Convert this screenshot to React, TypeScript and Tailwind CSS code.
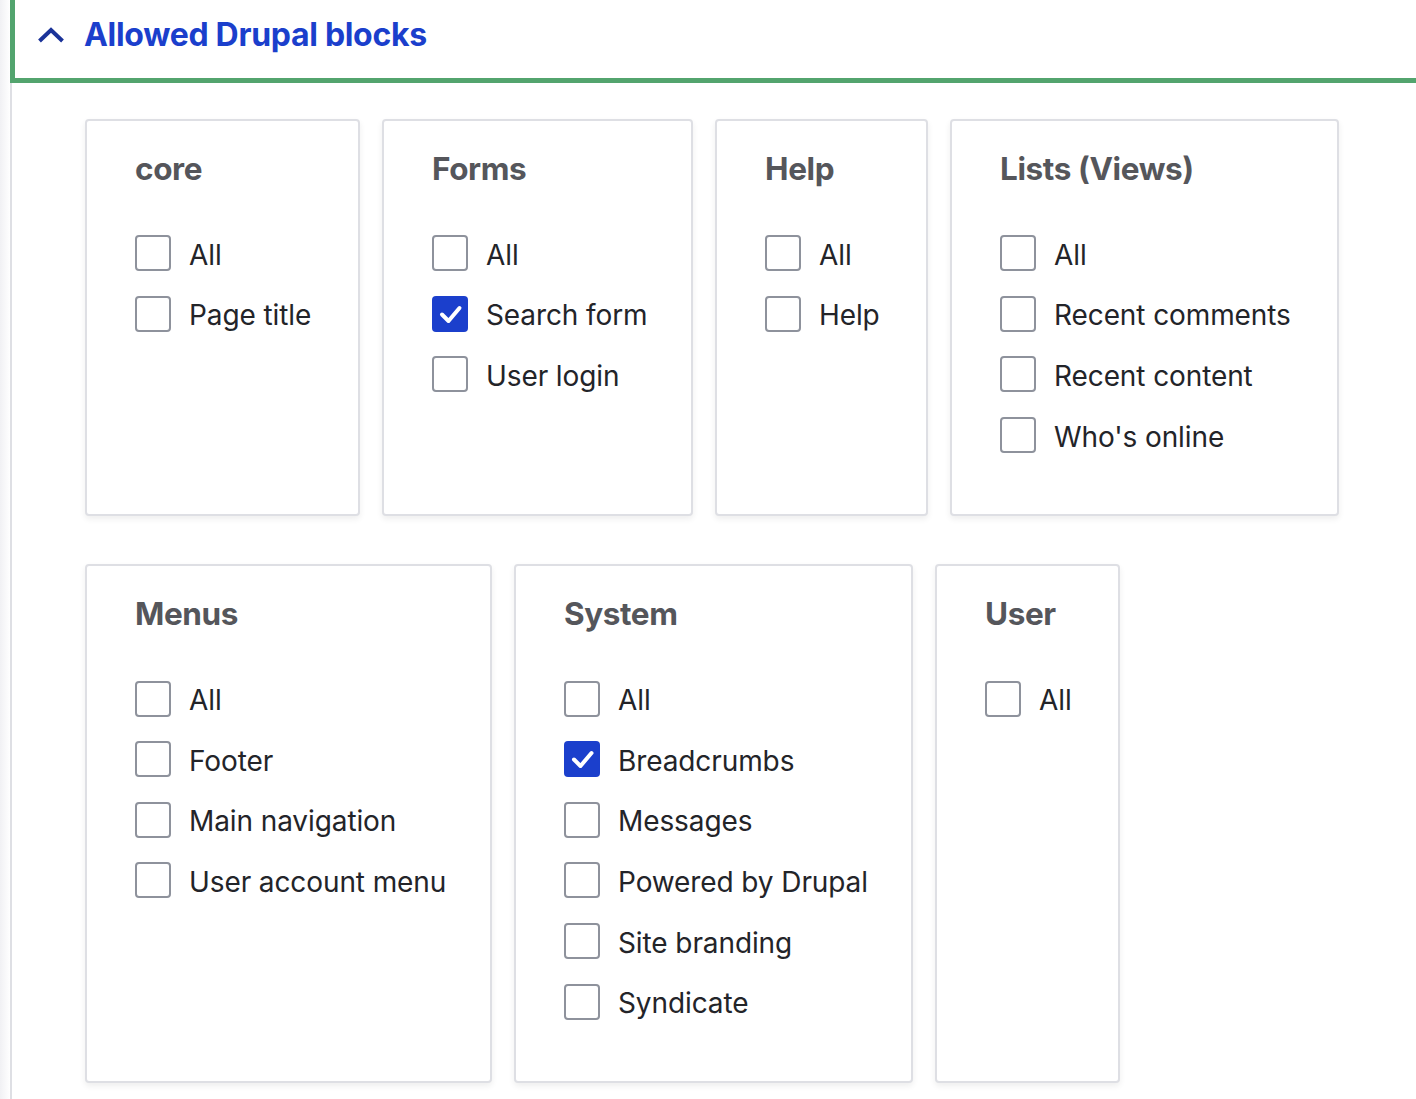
const groups: {
  title: string;
  width: string;
  items: { label: string; checked?: boolean }[];
}[][] = [
  [
    { title: 'core', width: 'w-[275px]', items: [{ label: 'All' }, { label: 'Page title' }] },
    {
      title: 'Forms',
      width: 'w-[311px]',
      items: [{ label: 'All' }, { label: 'Search form', checked: true }, { label: 'User login' }],
    },
    { title: 'Help', width: 'w-[213px]', items: [{ label: 'All' }, { label: 'Help' }] },
    {
      title: 'Lists (Views)',
      width: 'w-[389px]',
      items: [
        { label: 'All' },
        { label: 'Recent comments' },
        { label: 'Recent content' },
        { label: "Who's online" },
      ],
    },
  ],
  [
    {
      title: 'Menus',
      width: 'w-[407px]',
      items: [
        { label: 'All' },
        { label: 'Footer' },
        { label: 'Main navigation' },
        { label: 'User account menu' },
      ],
    },
    {
      title: 'System',
      width: 'w-[399px]',
      items: [
        { label: 'All' },
        { label: 'Breadcrumbs', checked: true },
        { label: 'Messages' },
        { label: 'Powered by Drupal' },
        { label: 'Site branding' },
        { label: 'Syndicate' },
      ],
    },
    { title: 'User', width: 'w-[185px]', items: [{ label: 'All' }] },
  ],
];

function Checkbox({ checked }: { checked?: boolean }) {
  if (checked) {
    return (
      <span className="flex h-[36px] w-[36px] shrink-0 items-center justify-center rounded-[4px] bg-[#1b3fcc]">
        <svg width="36" height="36" viewBox="0 0 36 36" fill="none">
          <path
            d="M10 18.5l6.5 6.5L27.5 12"
            stroke="white"
            strokeWidth="4"
            strokeLinecap="round"
            strokeLinejoin="round"
          />
        </svg>
      </span>
    );
  }
  return (
    <span className="block h-[36px] w-[36px] shrink-0 rounded-[4px] border-2 border-[#8e929c] bg-white" />
  );
}

export default function App() {
  return (
    <div className="flex min-h-[1099px] bg-white font-['Inter',sans-serif]">
      {/* faint edge shadow */}
      <div className="w-[10px] shrink-0 bg-gradient-to-r from-[#f1f1f4] to-white" />

      <div className="flex min-w-0 flex-1 flex-col">
        {/* Details summary */}
        <div className="flex h-[83px] items-center border-b-[5px] border-l-[5px] border-[#53a46e] pb-[8px] pl-[22px]">
          <svg width="28" height="16" viewBox="0 0 28 16" fill="none" className="mr-[19px]">
            <path d="M2.5 14L14 3l11.5 11" stroke="#1b3399" strokeWidth="4" />
          </svg>
          <span className="text-[32px] font-bold leading-none tracking-[-0.3px] text-[#1b3fcc]">
            Allowed Drupal blocks
          </span>
        </div>

        {/* Details body */}
        <div className="flex flex-1 flex-col gap-[48px] border-l-2 border-[#dedfe4] pl-[73px] pt-[36px] pb-[16px]">
          {groups.map((row, r) => (
            <div key={r} className="flex items-stretch gap-[22px]">
              {row.map((g) => (
                <div
                  key={g.title}
                  className={`${g.width} shrink-0 rounded-[4px] border-2 border-[#dedfe4] bg-white px-[48px] pt-[28px] pb-[49px] shadow-[0_3px_6px_rgba(0,0,0,0.07)]`}
                >
                  <h3 className="mb-[34px] whitespace-nowrap text-[31.5px] font-bold leading-[40px] tracking-[-0.4px] text-[#55565b]">
                    {g.title}
                  </h3>
                  <div className="flex flex-col">
                    {g.items.map((it) => (
                      <label key={it.label} className="flex h-[60.6px] items-center gap-[18px]">
                        <Checkbox checked={it.checked} />
                        <span className="mt-[3px] whitespace-nowrap text-[28px] leading-none tracking-[-0.1px] text-[#232429]">
                          {it.label}
                        </span>
                      </label>
                    ))}
                  </div>
                </div>
              ))}
            </div>
          ))}
        </div>
      </div>
    </div>
  );
}
